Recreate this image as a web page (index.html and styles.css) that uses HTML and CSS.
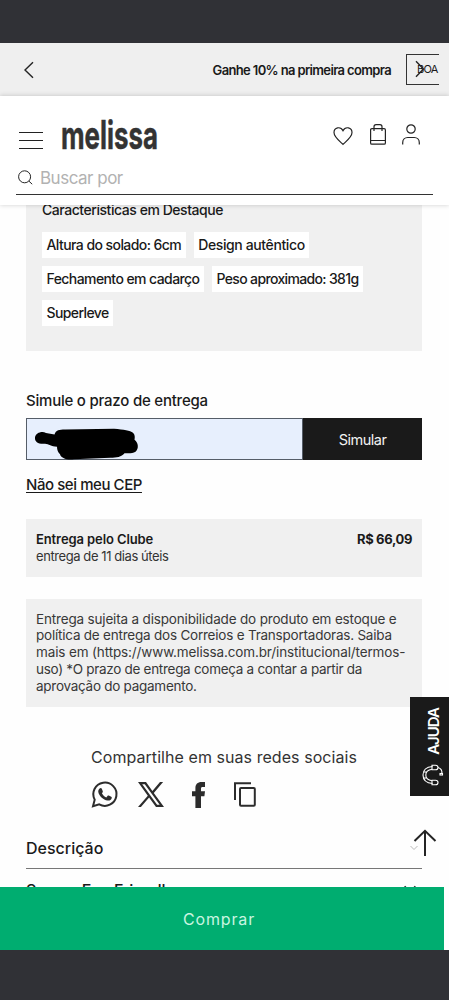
FILE: index.html
```html
<!DOCTYPE html>
<html lang="pt-BR">
<head>
<meta charset="utf-8">
<title>Melissa</title>
<link rel="stylesheet" href="styles.css">
</head>
<body>
<div class="screen">
  <div class="system-bar system-top"></div>
  <div class="promo">
    <svg class="promo-prev" width="12" height="18" viewBox="0 0 12 18"><path d="M10 1.2 2 9l8 7.8"/></svg>
    <div class="promo-track">
      <span class="promo-text">Ganhe 10% na primeira compra</span>
      <span class="coupon">BOA</span>
    </div>
    <svg class="promo-next" width="10" height="18" viewBox="0 0 10 18"><path d="M1 1.2 8.5 9 1 16.8"/></svg>
  </div>
  <header class="header">
    <div class="header-row">
      <div class="burger"><i></i><i></i><i></i></div>
      <svg class="logo" width="98" height="34" viewBox="0 0 98 34"><text x="0" y="30" textLength="97" lengthAdjust="spacingAndGlyphs">melissa</text></svg>
      <div class="tools">
        <svg width="20" height="20" viewBox="0 0 20 20"><path d="M10 18.4C7.400 15.700 1 11.400 1 6.600 1 1.200 7.600.100 10 4.600 12.400.100 19 1.200 19 6.600c0 4.800-6.400 9.100-9 11.800z"/></svg>
        <svg class="bag" width="16" height="21" viewBox="0 0 16 21"><rect x=".6" y="4.600" width="14.800" height="15.600" rx="1.300"/><path d="M.6 16.500h14.800M4 7V2.800Q4 .7 6 .7h4q2 0 2 2.100V7"/></svg>
        <svg class="user" width="18" height="21" viewBox="0 0 18 21"><circle cx="9" cy="5" r="4.200"/><path d="M.7 20.500v-1.800c0-3 2.200-5.200 5-5.200h6.600c2.800 0 5 2.200 5 5.200v1.800"/></svg>
      </div>
    </div>
    <div class="search">
      <svg width="15" height="15" viewBox="0 0 15 15"><circle cx="6.600" cy="6.800" r="6"/><path d="m11 11.200 3.200 3"/></svg>
      <span>Buscar por</span>
    </div>
  </header>
  <main class="content">
    <section class="features">
      <h2>Características em Destaque</h2>
      <div class="chips">
        <div class="chip-row"><span class="chip c1">Altura do solado: 6cm</span><span class="chip c2">Design autêntico</span></div>
        <div class="chip-row"><span class="chip c3">Fechamento em cadarço</span><span class="chip c4">Peso aproximado: 381g</span></div>
        <div class="chip-row"><span class="chip c5">Superleve</span></div>
      </div>
    </section>
    <section class="shipping">
      <h3>Simule o prazo de entrega</h3>
      <div class="cep-form">
        <div class="cep-input">
          <svg width="106" height="34" viewBox="0 0 106 34"><path d="M1 9.500C1.500 5 8 2.500 12 5l8.500 1.500C22 2 25 1.500 31 1.500L80 .8c10 1 16 1.500 19 4 2 2 2 4 1.500 7 4 3 4.500 9 1 12-3 2-7 1.500-11 1.500-3 4-8 4.200-14 4.500L40 31.200c-7 1-13-1-14-5-2-2-3-4-3-7.500-6 0-8-3-12-3C5 16.500.5 14 1 9.500z"/></svg>
        </div>
        <button class="cep-button">Simular</button>
      </div>
      <a class="cep-link">Não sei meu CEP</a>
    </section>
    <section class="quote">
      <div><strong class="quote-name">Entrega pelo Clube</strong><p>entrega de 11 dias úteis</p></div>
      <strong class="quote-price">R$ 66,09</strong>
    </section>
    <section class="notice">
      <span class="n1">Entrega sujeita a disponibilidade do produto em estoque e</span>
      <span class="n2">política de entrega dos Correios e Transportadoras. Saiba</span>
      <span class="n3">mais em (https://www.melissa.com.br/institucional/termos-</span>
      <span class="n4">uso) *O prazo de entrega começa a contar a partir da</span>
      <span class="n5">aprovação do pagamento.</span>
    </section>
    <section class="share">
      <h4>Compartilhe em suas redes sociais</h4>
      <div class="share-icons">
        <svg class="line-icon" width="27" height="27" viewBox="0 0 27 27"><path d="M2 25.200 3.700 18.700A11.600 11.600 0 1 1 8.200 23.300z"/><path class="solid" d="M8.600 7.500c.8-.8 1.700-.7 2.100.1l1.100 2.600c.2.600-.2 1.200-.9 2 .9 1.900 2.400 3.300 4.400 4.200l1.200-1.500c.4-.5.8-.5 1.300-.3l2.400 1.200c.6.300.7.700.5 1.400-.5 1.700-2.200 2.600-4 2.300-4.700-.8-8.700-4.800-9.400-8.600-.2-1.400.4-2.600 1.300-3.400z"/></svg>
        <svg class="x-icon" width="26" height="25" viewBox="0 0 26 25"><path class="solid" fill-rule="evenodd" d="M0 0h8l6.400 8.900L22 0h3.100L15.800 10.900 26 25h-8l-6.900-9.500L2.900 25H0l9.800-11.300zM4.200 2.200 19.100 22.800h2.600L6.800 2.200z"/></svg>
        <svg class="fb-icon" width="13" height="26" viewBox="0 0 13 26"><path class="solid" d="M3.400 26V14.300H0V9.300h3.400V6.200C3.400 2.200 5.700 0 9.500 0H13v4.900h-2.300c-1.300 0-1.700.6-1.700 1.900v2.500h4l-.6 5H9V26z"/></svg>
        <svg class="line-icon copy-icon" width="22" height="25" viewBox="0 0 22 25"><path d="M1 18V1.200h16"/><rect x="6" y="6" width="14.800" height="17.800" rx="1"/></svg>
      </div>
    </section>
    <section class="accordion">
      <div class="accordion-item"><span>Descrição</span><svg class="faded" width="8" height="6" viewBox="0 0 8 6"><path d="m.5 1 3.500 3.500L7.500 1"/></svg></div>
      <div class="accordion-item second"><span>Somos Eco Friendly</span><svg width="14" height="9" viewBox="0 0 14 9"><path d="m1.500 1.500 5.500 5.500 5.500-5.500"/></svg></div>
    </section>
  </main>
  <div class="buy-row"><button class="buy">Comprar</button></div>
  <div class="system-bar system-bottom"></div>

  <aside class="help">
    <span>AJUDA</span>
    <svg width="21" height="22" viewBox="0 0 21 22"><path d="M10.500 2.500C4 3 1 6.500 1 11s3 8 9.500 8.500M10 5.300C5.800 6 3.800 7.800 3.800 11s2 5 6.200 5.700M1.500 8h2.900M1.500 14h2.900"/><path d="M10 1.200h3.500q2.500 0 2.500 2.300T13.500 5.800H10zM10 16.200h3.500q2.500 0 2.500 2.300t-2.500 2.300H10z"/><path d="M16 3.500c2.800.8 4.200 3 3.900 6"/><rect x="18" y="9.500" width="2.500" height="1.500"/></svg>
  </aside>
  <svg class="to-top" width="24" height="28" viewBox="0 0 24 28"><path d="M12 27V2M1.500 12 12 1.800 22.500 12"/></svg>
</div>
</body>
</html>
```
FILE: styles.css
```css
* { box-sizing: border-box; }
body { margin: 0; background: #fefefe; font-family: Inter, "Open Sans", sans-serif; color: #1a1a1a; }
h2, h3, h4, p { margin: 0; font-weight: 500; }
button { border: 0; padding: 0; font-family: inherit; }
svg { display: block; flex: none; fill: none; stroke: #242424; overflow: visible; }
.screen { position: relative; width: 449px; height: 1000px; display: flex; flex-direction: column; overflow: hidden; white-space: nowrap; }
.system-bar { flex: none; background: #303136; }
.system-top { height: 43px; }
.system-bottom { height: 50px; }

.promo { position: relative; flex: none; height: 53px; padding: 0 10px 0 23px; display: flex; align-items: center; justify-content: space-between; background: #efefef; }
.promo svg { stroke-width: 1.4; }
.promo-track { display: flex; align-items: center; gap: 15px; }
.promo-text { font-size: 13px; font-weight: 600; letter-spacing: -0.64px; }
.coupon { width: 33px; height: 31px; padding-left: 10px; border: 1px solid #333; border-right: 0; font-size: 11px; line-height: 29px; letter-spacing: -0.8px; }
.promo-next { position: absolute; left: 415px; top: 17px; }

.header { position: relative; z-index: 1; flex: none; height: 109px; padding: 20px 16px 0; background: #fff; box-shadow: 0 1px 4px rgba(0,0,0,.12), 0 -2px 4px rgba(0,0,0,.07); }
.header-row { display: flex; align-items: flex-start; height: 48px; padding-left: 3px; }
.burger { width: 24px; margin-top: 15.500px; display: grid; gap: 7px; }
.burger i { height: 1.300px; background: #222; }
.logo { margin: 3px 0 0 18px; }
.logo text { font-size: 39px; font-weight: 700; fill: #333; stroke: #333; stroke-width: .5px; }
.tools { display: flex; gap: 17px; align-items: flex-start; margin: 8px 0 0 173.500px; }
.tools svg { stroke-width: 1.200; }
.tools svg:first-child { margin-top: 2px; }
.tools .user { margin-left: -1px; }
.search { display: flex; align-items: center; gap: 7px; height: 31px; padding: 0 0 3px 2px; border-bottom: 1px solid #333; font-size: 17px; letter-spacing: -0.5px; color: #b2b2b2; }

.content { flex: none; height: 682px; padding: 0 27px 0 26px; overflow: hidden; }
.features { height: 146px; padding-left: 16px; background: #f0f0f0; }
.features h2 { margin-bottom: 17.500px; height: 9.500px; display: flex; align-items: center; font-size: 14px; letter-spacing: -0.45px; }
.chips { display: grid; gap: 8.200px; }
.chip-row { display: flex; gap: 8px; }
.chip { height: 26px; padding: 0 4.500px; background: #fff; font-size: 14px; line-height: 25px; font-weight: 500; }
.c1 { letter-spacing: -0.57px; }
.c2 { letter-spacing: -0.38px; }
.c3 { letter-spacing: -0.58px; }
.c4 { letter-spacing: -0.65px; }
.c5 { letter-spacing: -0.6px; }
.shipping { padding-top: 40px; }
.shipping h3 { height: 20px; margin-bottom: 7px; font-size: 15px; line-height: 20px; letter-spacing: -0.22px; }
.cep-form { display: flex; height: 42px; }
.cep-input { width: 277px; padding: 9px 0 0 7px; border: 1px solid #555d68; background: #e7effd; }
.cep-input svg { fill: #000; stroke: none; }
.cep-button { flex: 1; background: #1a1a1a; color: #f2f2f2; font-size: 14.500px; letter-spacing: -0.5px; }
.cep-link { display: block; height: 20px; margin-top: 15px; font-size: 15px; line-height: 20px; font-weight: 500; letter-spacing: -0.43px; text-decoration: underline; text-underline-offset: 2px; }
.quote { display: flex; justify-content: space-between; height: 58px; margin-top: 24px; padding: 12px 10px; background: #f0f0f0; font-size: 13px; line-height: 17px; }
.quote-name { font-weight: 600; letter-spacing: -0.1px; }
.quote-price { font-weight: 700; letter-spacing: -0.35px; }
.quote p { font-weight: 400; color: #333; letter-spacing: -0.42px; }
.notice { display: grid; align-content: start; justify-items: start; height: 108px; margin-top: 21.500px; padding: 12px 10px; background: #f0f0f0; color: #383838; font-size: 13.500px; line-height: 16.800px; }
.n1 { letter-spacing: -0.17px; }
.n2 { letter-spacing: -0.22px; }
.n3 { letter-spacing: -0.13px; }
.n4 { letter-spacing: -0.29px; }
.n5 { letter-spacing: -0.27px; }
.share { padding: 38px 0 0 65px; }
.share h4 { height: 24px; font-size: 16px; line-height: 24px; font-weight: 400; letter-spacing: 0.06px; color: #333; }
.share-icons { display: flex; align-items: center; height: 28px; margin-top: 12px; }
.line-icon { stroke-width: 2; stroke: #2c2c2c; }
.solid { fill: #2c2c2c; stroke: none; }
.x-icon { margin-left: 20px; }
.fb-icon { margin-left: 28px; }
.copy-icon { margin-left: 29px; }
.accordion { margin-top: 19px; }
.accordion-item { display: flex; align-items: center; justify-content: space-between; height: 41.500px; padding-right: 4px; border-bottom: 1px solid #777; font-size: 16px; font-weight: 500; }
.accordion-item svg { stroke-width: 2; }
.accordion-item .faded { stroke: #bbb; stroke-width: 1; }
.accordion-item.second { border: 0; padding-right: 5px; letter-spacing: -0.15px; }

.buy-row { flex: none; height: 63px; padding-right: 5px; display: flex; }
.buy { flex: 1; padding-right: 6px; background: #00ad70; color: #c9f5e0; font-size: 16px; letter-spacing: 0.85px; }

.help { position: absolute; right: 0; top: 697px; width: 39px; height: 99px; padding: 11px 5px 10px 12px; display: flex; flex-direction: column; justify-content: space-between; background: #1a1a1a; }
.help span { writing-mode: vertical-rl; transform: rotate(180deg); color: #fff; font-size: 15px; line-height: 24px; font-weight: 600; letter-spacing: -1px; }
.help svg { stroke: #fff; stroke-width: 1.100; }
.to-top { position: absolute; left: 413px; top: 829px; stroke-width: 2; }
```
